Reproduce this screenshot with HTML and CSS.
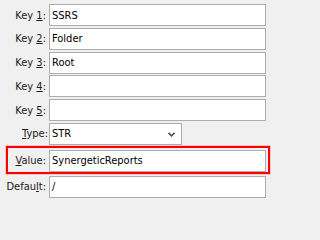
FILE: index.html
```html
<!DOCTYPE html>
<html>
<head>
<meta charset="utf-8">
<link rel="stylesheet" href="styles.css">
</head>
<body>
<div class="form">
  <div class="group">
    <div class="row"><label class="lbl">Key <u>1</u>:</label><div class="field">SSRS</div></div>
    <div class="row"><label class="lbl">Key <u>2</u>:</label><div class="field">Folder</div></div>
    <div class="row"><label class="lbl">Key <u>3</u>:</label><div class="field">Root</div></div>
    <div class="row"><label class="lbl">Key <u>4</u>:</label><div class="field"></div></div>
    <div class="row"><label class="lbl">Key <u>5</u>:</label><div class="field"></div></div>
    <div class="row"><label class="lbl lbl-type"><u>T</u>ype:</label>
      <div class="select"><span>STR</span>
        <svg class="chev" width="7" height="5" viewBox="0 0 7 5"><path d="M0.5 0.8 L3.5 3.8 L6.5 0.8" fill="none" stroke="#505050" stroke-width="1.6"/></svg>
      </div>
    </div>
  </div>
  <div class="row highlight"><label class="lbl"><u>V</u>alue:</label><div class="field">SynergeticReports</div></div>
  <div class="row last"><label class="lbl">Defau<u>l</u>t:</label><div class="field">/</div></div>
</div>
</body>
</html>
```
FILE: styles.css
```css
html, body {
  margin: 0;
  padding: 0;
  background: #f0f0f0;
  width: 271px;
  height: 202px;
  overflow: hidden;
}
.form {
  display: flex;
  flex-direction: column;
  padding: 4px 5px 0 0;
  font-family: "DejaVu Sans Condensed", "Liberation Sans", sans-serif;
  font-size: 11px;
  color: #000;
}
.group {
  display: flex;
  flex-direction: column;
  gap: 1.8px;
}
.row {
  display: grid;
  grid-template-columns: 46px 1fr;
  column-gap: 3px;
  height: 22px;
  align-items: center;
}
.lbl {
  text-align: right;
  white-space: nowrap;
  color: #1a1a1a;
}
.lbl-type {
  margin-right: -2px;
}
u {
  text-decoration: underline;
  text-underline-offset: 1px;
}
.field, .select {
  box-sizing: border-box;
  height: 22px;
  background: #fff;
  border: 1px solid #adadad;
  padding: 0 2px;
  display: flex;
  align-items: center;
  white-space: nowrap;
  overflow: hidden;
}
.select {
  width: 133px;
  justify-content: space-between;
  padding-right: 6px;
}
.chev {
  display: block;
  margin-top: 1px;
}
.highlight {
  margin: 1px -4px 0 6px;
  height: 28px;
  box-sizing: border-box;
  border: 2px solid #ff0000;
  box-shadow: 0 0 0 0.5px #ff9a9a;
  padding: 2px 2px 0 0;
  grid-template-columns: 38px 1fr;
  align-items: start;
}
.highlight .lbl {
  line-height: 22px;
}
.last {
  margin-top: 2px;
}
```
